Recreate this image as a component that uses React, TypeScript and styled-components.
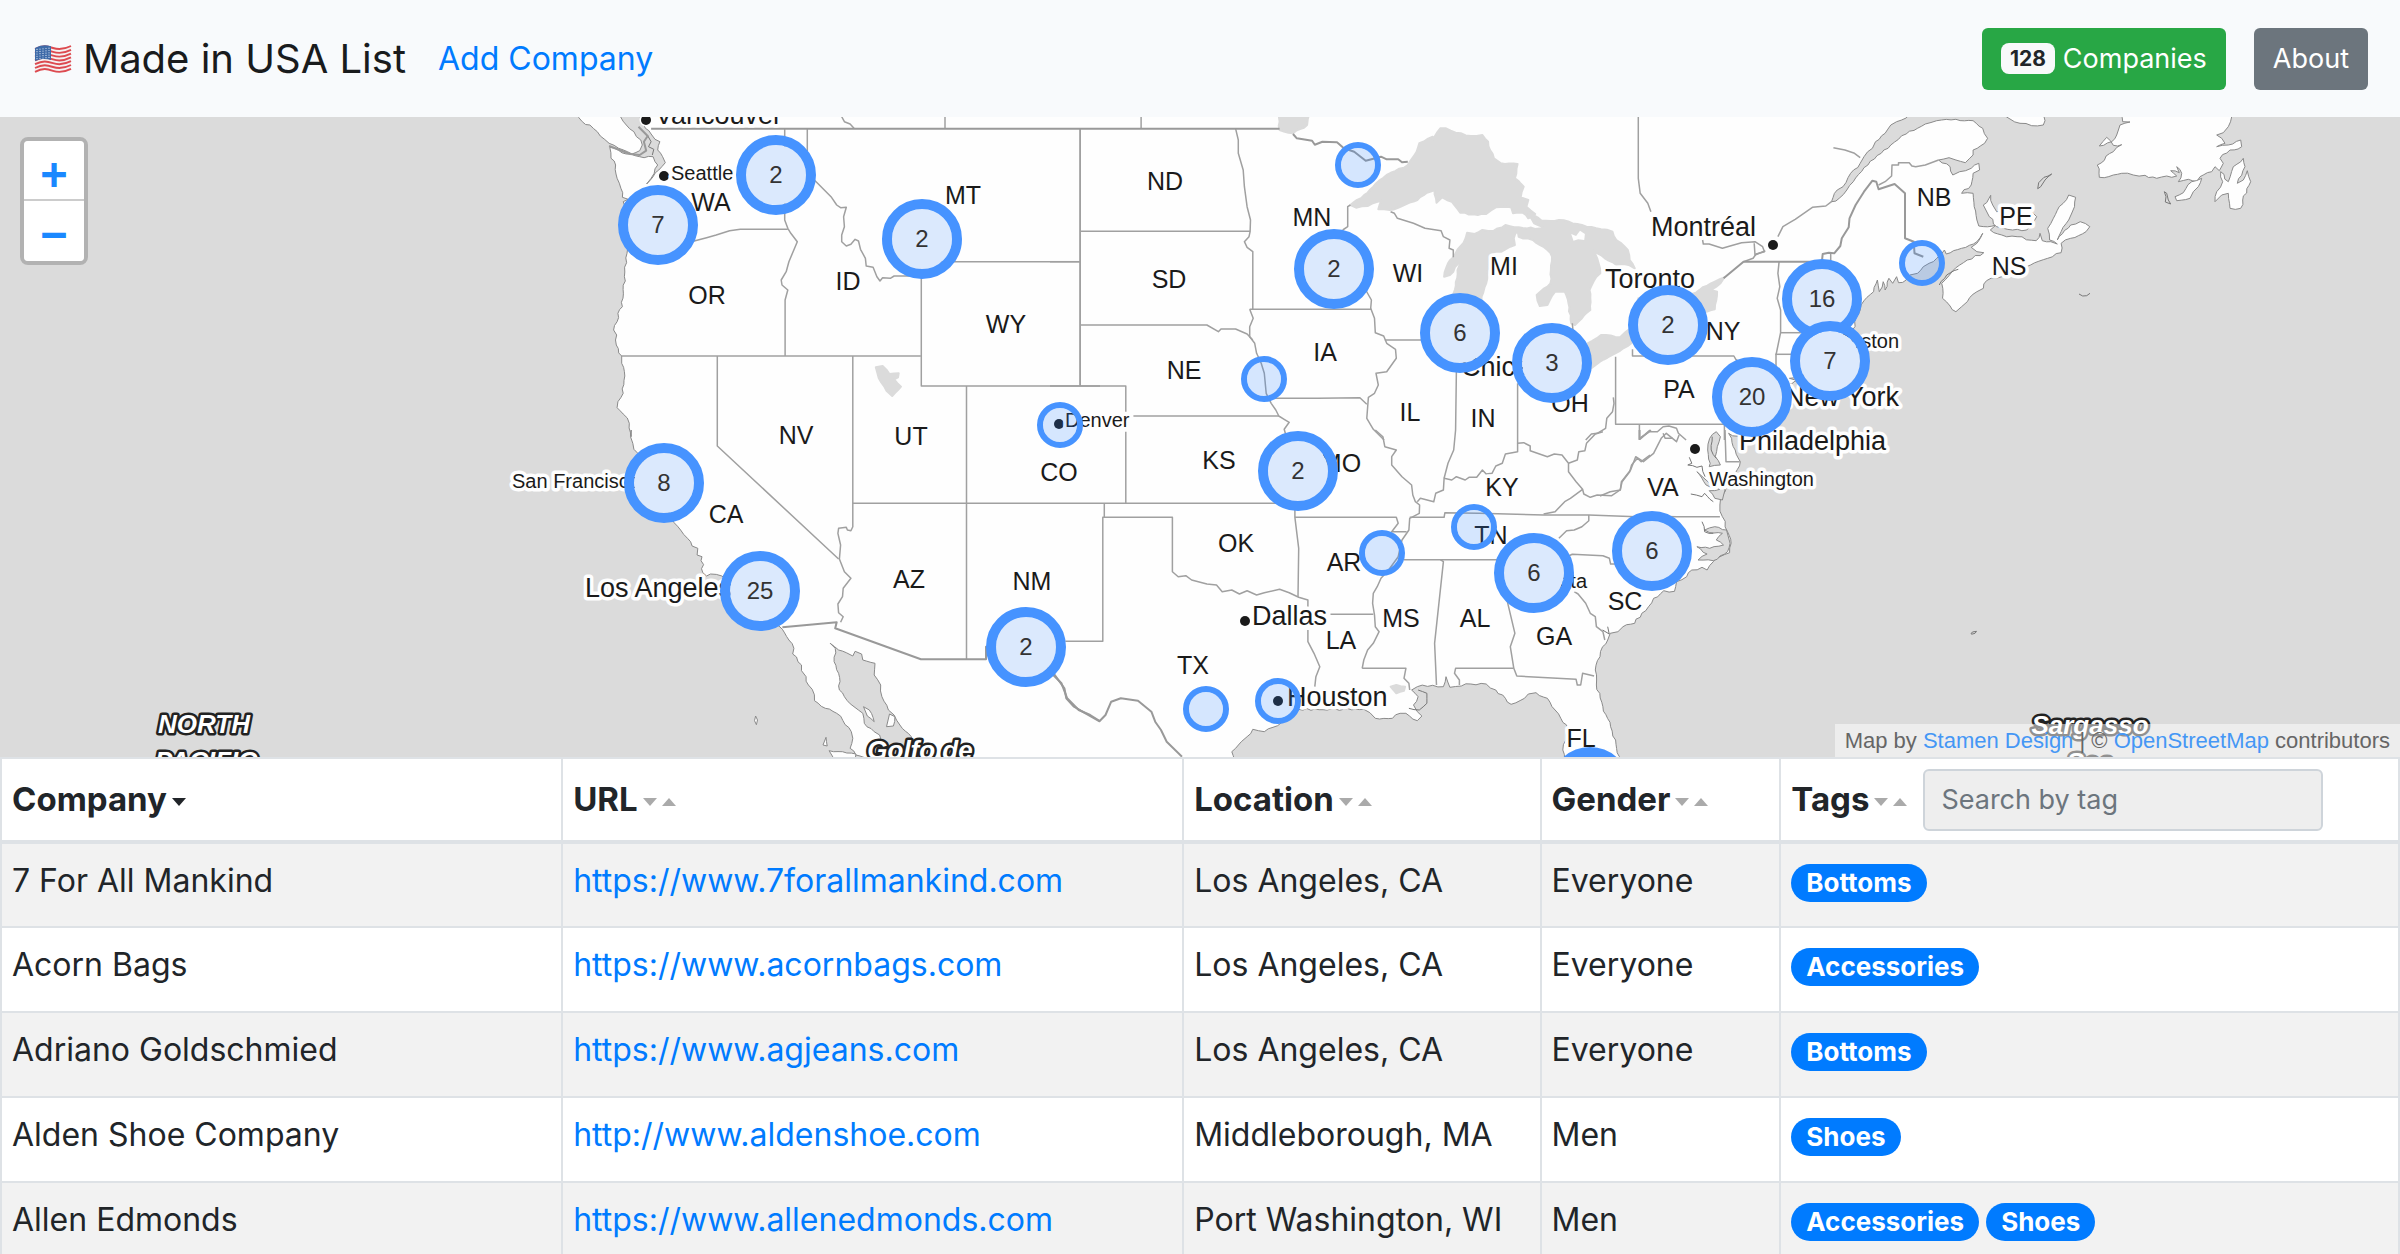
import React from "react";
import styled, { createGlobalStyle } from "styled-components";

const GlobalStyle = createGlobalStyle`
  *, *::before, *::after { box-sizing: border-box; }
  html { scrollbar-width: none; }
  body {
    margin: 0;
    background: #fff;
    color: #212529;
    font-family: Inter, "Liberation Sans", sans-serif;
    font-size: 32px;
    line-height: 51px;
  }
  a { color: #007bff; text-decoration: none; }
  button, input { font-family: inherit; }
`;

/* ---------- Navbar ---------- */

const Navbar = styled.header`
  display: flex;
  align-items: center;
  gap: 32px;
  min-height: 117px;
  padding: 27px 32px;
  background: #f8fafc;
`;

const Brand = styled.a`
  display: flex;
  align-items: center;
  gap: 9px;
  color: #191b1d;
  font-size: 40px;
  line-height: 60px;
  white-space: nowrap;
`;

const NavLink = styled.a`
  font-size: 32px;
  white-space: nowrap;
`;

const NavActions = styled.div`
  display: flex;
  gap: 28px;
  margin-left: auto;
`;

const NavButton = styled.button<{ $color: string }>`
  display: flex;
  align-items: center;
  gap: 8px;
  height: 62px;
  padding: 0 19px;
  border: 0;
  border-radius: 6px;
  background: ${(p) => p.$color};
  color: #fff;
  font-size: 27px;
  white-space: nowrap;
`;

const Count = styled.span`
  padding: 4px 9px;
  border-radius: 8px;
  background: #f8f9fa;
  color: #212529;
  font-size: 21px;
  font-weight: 700;
  line-height: 23px;
`;

/* ---------- Map ---------- */

const MapPane = styled.section`
  position: relative;
  height: 640px;
  overflow: hidden;
  background: #dbdbdb;
`;

const MapPlane = styled.div`
  position: absolute;
  top: 0;
  left: 50%;
  width: 2400px;
  height: 640px;
  margin-left: -1200px;
`;

const MapSvg = styled.svg`
  display: block;
  width: 100%;
  height: 100%;
  font-family: "Liberation Sans", Arial, sans-serif;
`;

const Marker = styled.button<{ $x: number; $y: number; $small?: boolean }>`
  position: absolute;
  left: ${(p) => p.$x}px;
  top: ${(p) => p.$y - 117}px;
  width: ${(p) => (p.$small ? 46 : 80)}px;
  height: ${(p) => (p.$small ? 46 : 80)}px;
  padding: 0;
  transform: translate(-50%, -50%);
  border: ${(p) => (p.$small ? 6 : 10)}px solid #4693ff;
  border-radius: 50%;
  background: ${(p) => (p.$small ? "rgba(51, 136, 255, 0.2)" : "#dbe9fd")};
  background-clip: padding-box;
  color: #333;
  font-family: "Liberation Sans", Arial, sans-serif;
  font-size: 24px;
  line-height: 28px;
`;

const ZoomControl = styled.div`
  position: absolute;
  top: 20px;
  left: 20px;
  display: flex;
  flex-direction: column;
  border: 4px solid #b2b2b2;
  border-radius: 8px;
  overflow: hidden;
`;

const ZoomButton = styled.button`
  width: 60px;
  height: 60px;
  padding: 6px 0 0;
  border: 0;
  background: #fff;
  color: #1a88ff;
  font-family: "DejaVu Sans Mono", monospace;
  font-size: 44px;
  font-weight: 700;
  line-height: 54px;
  &:first-child { border-bottom: 2px solid #ccc; }
`;

const Attribution = styled.div`
  position: absolute;
  right: 0;
  bottom: 0;
  padding: 0 10px;
  background: rgba(255, 255, 255, 0.5);
  color: #666;
  font-family: "Liberation Sans", Arial, sans-serif;
  font-size: 22px;
  line-height: 33px;
  a { color: #4597f5; }
`;

/* ---------- Table ---------- */

const Table = styled.table`
  width: 100%;
  table-layout: fixed;
  border-collapse: collapse;
`;

const HeadCell = styled.th<{ $width: string }>`
  width: ${(p) => p.$width};
  height: 84px;
  padding: 8px 10px;
  border: 2px solid #dee2e6;
  border-bottom-width: 4px;
  text-align: left;
  vertical-align: middle;
  white-space: nowrap;
`;

const HeadRow = styled.div`
  display: flex;
  align-items: center;
  gap: 16px;
`;

const SortButton = styled.button`
  display: flex;
  align-items: center;
  gap: 5px;
  padding: 0;
  border: 0;
  background: none;
  color: #212529;
  font-size: 33px;
  font-weight: 700;
  line-height: 51px;
`;

const Arrow = styled.span<{ $up?: boolean; $active?: boolean }>`
  margin-top: 4px;
  border: 7px solid transparent;
  border-width: ${(p) => (p.$up ? "0 7px 8px" : "8px 7px 0")};
  border-${(p) => (p.$up ? "bottom" : "top")}-color: ${(p) => (p.$active ? "#212529" : "#aaa")};
`;

const TagSearch = styled.input`
  width: 400px;
  min-width: 0;
  height: 62px;
  padding: 0 16px;
  border: 2px solid #ced4da;
  border-radius: 6px;
  background: #eee;
  color: #495057;
  font-size: 27px;
  &::placeholder { color: #6c757d; opacity: 1; }
`;

const Row = styled.tr`
  background: #fff;
  &:nth-child(odd) { background: #f2f2f2; }
`;

const Cell = styled.td`
  height: 85px;
  padding: 11px 10px 9px;
  border: 2px solid #dee2e6;
  vertical-align: top;
  white-space: nowrap;
`;

const Tags = styled.div`
  display: flex;
  gap: 7px;
  padding-top: 9px;
`;

const Tag = styled.span`
  padding: 0 15px;
  border-radius: 20px;
  background: #007bff;
  color: #fff;
  font-size: 26px;
  font-weight: 700;
  line-height: 38px;
`;

/* ---------- Map geometry ---------- */

type Pt = [number, number];

/* The outlines are digitised in sheets; each has its own origin and scale. */
const SHEETS: Record<string, [number, number, number, number]> = {
  A: [500, 110, 0.38265, 1 / 3],
  B: [1050, 110, 0.38265, 1 / 3],
  C: [1600, 110, 0.38265, 1 / 3],
  D: [500, 430, 0.38265, 1 / 3],
  E: [1050, 430, 0.38265, 1 / 3],
  F: [1600, 430, 0.5102, 1 / 3],
  G: [1900, 0, 1 / 3, 1 / 3],
};

/* Reads "A 1,2 3,4 B 5,6" into plane coordinates. */
const read = (src: string): Pt[] => {
  let sheet = SHEETS.A;
  const out: Pt[] = [];
  src.trim().split(/\s+/).forEach((tok) => {
    if (SHEETS[tok]) {
      sheet = SHEETS[tok];
      return;
    }
    const [x, y] = tok.split(",").map(Number);
    out.push([sheet[0] + x * sheet[2], sheet[1] + y * sheet[3]]);
  });
  return out;
};

/* Breaks long straight runs into the small irregularities of a shoreline. */
const roughen = (pts: Pt[], amount: number): Pt[] => {
  const out: Pt[] = [];
  pts.forEach((p, i) => {
    out.push(p);
    const q = pts[i + 1];
    if (!q) return;
    const dx = q[0] - p[0];
    const dy = q[1] - p[1];
    const len = Math.hypot(dx, dy);
    const n = Math.min(60, Math.floor(len / 4));
    for (let k = 1; k < n; k++) {
      const r = Math.sin((p[0] + k * 12.9898) * 7.23 + p[1] * 3.1) * 43758.5453;
      const off = (r - Math.floor(r) - 0.5) * amount;
      out.push([p[0] + (dx * k) / n - (dy / len) * off, p[1] + (dy * k) / n + (dx / len) * off]);
    }
  });
  return out;
};

const path = (src: string, rough = 0, closed = false) => {
  const pts = rough ? roughen(read(src), rough) : read(src);
  return "M" + pts.map(([x, y]) => `${x.toFixed(1)},${y.toFixed(1)}`).join("L") + (closed ? "Z" : "");
};

const LAND = [
  // North America, clockwise from the Strait of Georgia
  `A 350,-20 B 1000,-20 C 812,10 800,24 775,35 760,45 745,70 720,95 712,115 690,140 680,160 655,190 635,230 620,240 605,275
   625,265 645,240 662,215 700,165 735,130 760,105 800,72 850,42 880,32 930,28 975,32 1000,55 1013,85 1005,100 975,120 975,135 955,158 930,150 912,143 885,150
   915,170 922,195 940,185 970,175 990,160 992,180 975,190 972,215 970,225 945,250 975,250 978,290 985,330 990,348 1035,345 1020,360 1050,375 1090,380 1140,392 1150,370
   1156,392 1178,395 1195,402 1175,390 1170,355 1185,325 1200,290 1225,255 1243,262 1240,290 1232,312 1225,330 1205,365 1195,390 1230,345 1255,335 1280,350 1270,365 1230,385 1205,400 1205,428
   1170,445 1125,465 1090,480 1050,500 1010,512 1002,535 985,545 960,575 945,590 930,605 915,588 895,565 893,520 920,485 960,450 1003,428 985,425 970,412 985,400
   1000,370 985,395 945,415 905,432 900,420 880,445 860,460 845,470 830,490 810,495 800,510 780,518 775,500 765,520 755,505 745,540 740,515 730,545 725,510 715,545 690,572
   680,600 660,660 640,690 660,710 680,730 655,745 640,740 610,770 560,785 520,800 495,805 520,812 470,830 440,870 430,920 400,960 370,985
   F 252,10 258,25 265,60 275,95 265,130 255,160 245,185 236,210 235,225 240,260 250,305 257,340 254,368 235,380 222,395 210,420 200,412 180,420 170,440 150,455
   146,484 125,482 105,505 95,530 82,550 68,580 45,590 35,605 20,610 15,630 5,650 0,680
   E 1425,720 1428,765 1445,830 1465,890 1478,930 1488,980 1490,1040 1350,1040 1340,960 1348,930 1350,885 1335,865 1320,840 1300,805
   1270,788 1250,792 1240,805 1205,823 1190,805 1165,780 1140,762 1100,762 1075,768 1045,772 1035,740 1028,770 1000,766 960,770 945,780 962,800 950,825
   960,845 972,858 960,872 930,850 915,850 895,865 850,865 836,848 820,838 650,838 625,855 605,878 560,905 530,898 515,920 500,935 485,955 475,965 490,1040
   D 1040,1040 1000,1010 930,975 915,955 922,925 918,905 880,850 850,835 822,812 816,778 806,765 800,740 788,722 788,705 765,672 768,655 755,630 738,598
   700,560 620,480 580,438 550,432 540,438 530,428 528,380 515,375 517,355 502,348 490,325 472,300 455,278 420,200 390,110 360,70 350,58 347,40 341,20 343,0
   A 343,980 338,940 322,912 306,893 308,875 322,850 325,785 318,760 318,738 304,705 305,675 297,660 306,635 308,610 320,590 325,500 332,430 330,300 322,275
   335,268 320,262 316,235 306,205 302,165 290,145 287,112 330,132 365,140 400,140 405,155 412,165 403,190 395,205 383,222 400,200 415,180 432,158 425,140
   412,120 418,95 405,88 395,72 380,55`,
  `A 195,10 215,35 235,45 262,78 285,100 310,115 345,132 365,122 372,105 368,90 350,65 330,45 315,20 310,10`,
  `G 310,340 330,357 360,370 395,377 430,375 435,362 425,340`,
  `G 664,340 668,365 690,366 660,375 650,405 635,425 598,438 620,412 640,436 665,434 640,455 592,495 598,532 640,525 665,520 700,525 735,526 770,535 800,528
   830,528 812,512 838,518 830,500 845,520 835,545 865,538 890,545 900,530 935,515 945,500 958,512 970,490 960,475 990,450 1025,440 1022,420 985,435 950,440 975,430 965,415 950,405 970,398 985,380 995,350 990,340`,
  `G 825,590 850,578 875,545 905,535 895,560 880,575 870,595 830,602`,
  `G 945,605 950,575 968,545 962,515 985,545 1000,500 1030,475 1035,500 1012,550 1030,540 1042,512 1052,545 1028,600 1022,625 990,625 985,580 965,585`,
  `G 250,615 272,586 278,615 290,635 330,620 400,640 410,650 380,690 310,685 290,680 268,650`,
];

const WATER = [
  // Gulf of California
  `D 863,640 885,660 905,668 922,678 928,664 945,672 948,690 980,700 978,735 995,765 998,800 1015,840 1030,855 1045,885 1075,920 1085,1000 1030,1000 1010,960 992,915
   978,905 952,880 948,850 925,830 900,800 887,780 885,730 873,695 876,655`,
  // Chesapeake Bay
  `F 228,5 215,25 211,60 216,100 214,110 236,105 226,80 230,50 236,20`,
  `F 190,125 208,165 235,178 214,182 225,205 240,210 245,180 232,165 215,160`,
  `F 248,300 225,290 205,300 215,308 240,310 228,330 242,345 215,355 190,350 210,372 192,390 222,392 250,365 255,340`,
];

const LAKES = [
  `B 785,285 830,248 860,212 880,195 935,165 958,125 965,100 1000,80 1000,90 1020,55 1035,55 1060,68 1100,78 1130,75 1145,95 1150,120 1160,145 1178,160 1222,162 1215,205
   1238,230 1230,262 1250,270 1245,290 1268,312 1250,325 1235,308 1210,310 1205,292 1165,292 1140,312 1118,315 1072,308 1050,275 1025,262 1010,278 1005,240 985,248 960,270
   920,288 888,300 858,298 866,272 830,288 800,293`,
  `B 1248,305 1285,332 1330,330 1390,345 1440,358 1470,365 1480,390 1510,420 1515,450 1528,475 1500,462 1480,465 1450,445 1420,420 1430,445 1438,490 1420,515 1410,540 1412,600
   1372,645 1362,640 1355,580 1345,545 1320,545 1300,585 1280,588 1272,555 1308,520 1312,440 1300,420 1262,390 1225,380 1222,362 1212,385 1215,405 1180,425 1150,430 1140,520
   1128,560 1130,640 1115,690 1060,690 1045,610 1058,540 1065,480 1075,450 1045,495 1030,500 1040,460 1060,430 1080,400 1090,368 1110,372 1130,360 1160,362 1190,345
   1225,352 1300,358 1265,340`,
  `B 1385,765 1405,700 1440,675 1490,682 1505,665 C 80,655 82,700 40,730 0,755 B 1415,775`,
  `C 240,552 290,520 325,502 315,520 290,540 306,545 300,598 278,605 200,640 90,610 100,565`,
  `B 597,10 600,60 635,70 672,45 678,10`,
  `A 982,772 1000,768 1018,792 1042,790 1040,802 1030,808 1048,830 1025,858 1010,842 990,805`,
  `E 890,770 905,765 928,770 925,782 905,790`,
];

const ISLANDS = [
  `D 950,830 965,840 978,875 960,858`,
  `D 1018,852 1032,860 1028,888 1010,890`,
  `D 668,858 673,870 670,884 665,872`,
  `D 852,922 855,948 844,945`,
  `D 860,962 895,965 930,972 925,1000 880,1000`,
];

const LAKE_ISLAND = `B 1362,372 1375,378 1385,362 1398,372 1396,390 1380,388 1368,392`;

const MISC_COAST = [
  `G 413,566 416,548 432,532 455,522 435,540 422,560 413,566`,
  `G 793,575 800,580 805,600 812,612 796,606 798,590 793,575`,
  `G 537,882 548,888 560,887 570,880`,
  `G 118,855 140,825 175,808`,
  `F 727,612 730,606 738,604 735,610 728,613`,
  `E 962,780 985,790 985,820 965,840 938,835`,
  `F 220,20 218,60 228,85`,
  `F 175,82 180,100 172,105 190,112 200,108 206,140`,
  `F 178,192 200,200 205,190 222,215`,
  `F 200,275 205,305 222,310`,
  `F 15,590 18,612 5,600`,
  `A 385,75 395,95 388,110 402,118 398,135`,
];

const BORDERS = [
  `A 395,56 1568,56 B 600,56`,
  `B 635,72 645,85 685,92 692,104 712,95 750,97 768,115 795,125 825,152 865,140 880,148 910,148 920,157 935,155`,
  `C 323,505 375,455 580,455 582,432 598,428 612,430 628,408 632,385 650,352 652,325 668,285 690,245 712,212 722,215 728,238 770,222 797,250 797,385 820,395 822,430 845,440`,
  `D 738,592 880,577 876,595 1100,688 1270,688 1270,650 1375,650 1450,735 1475,775 1480,805 1500,830 1530,850 1568,875`,
  `E 0,725 30,760 45,805 75,840 105,855 130,873 145,855 160,815 185,805 230,812 265,845 275,875 290,900 305,935 345,980`,
  `A 285,108 340,132 365,135 382,122 376,95 386,78 362,50`,
];

const STATES = [
  `A 893,20 900,35 915,42 925,55`, `A 1163,20 1163,55`, `B 238,20 238,55`,
  `A 744,56 744,330 752,355 760,370 777,395 755,455 748,485 735,510 737,525 752,540 745,570 745,738`,
  `A 500,395 540,383 565,375 600,362 628,358 752,358`,
  `A 803,56 803,190 830,220 865,260 880,285 890,293 905,292 898,320 900,350 893,375 893,395 905,408 917,403 928,388 937,393 942,418 955,445 957,468 975,472 985,500 993,513 1000,503 1020,505 1030,498 1101,498`,
  `A 318,738 1100,738`, `A 1101,455 1516,455`, `A 1516,56 1516,828`, `A 1101,455 1101,828 1568,828`,
  `A 568,738 D 568,48 885,387`, `A 922,738 D 922,290 917,302 908,300 905,292 885,295 883,310 890,345 887,387 900,425 917,445 897,475 895,500 883,522 885,548 897,560 890,577`,
  `A 1219,828 D 1219,688`, `D 922,220 E 640,220`,
  `B 0,455 79,455`, `B 79,56 79,828`, `B 79,364 523,364`,
  `B 485,56 492,90 492,130 505,180 508,230 515,290 524,330 523,365 520,380 508,395 515,412 530,425 530,598`,
  `B 79,645 410,645 440,665 447,657 485,657 515,672 530,690`,
  `B 522,598 840,598`, `B 522,598 531,625 522,650 522,680 535,700 540,730 552,760 560,790 565,850 578,880 590,900 598,918 612,928 625,937 612,958 620,990`,
  `B 0,828 198,828 198,905`, `B 198,965 E 198,220`, `B 218,918 598,918`,
  `B 570,865 700,865 810,863 828,883`, `B 875,690 970,690`, `B 765,360 778,350 778,290 785,285`,
  `B 825,540 840,570 838,595 848,625 850,668 872,678 880,700 903,718 905,745 880,785 852,790 858,825 848,850 832,862 828,925 845,958 873,990`,
  `B 890,305 900,310 908,325 950,340 980,355 1022,362 1028,380 1045,390 1043,415 1054,420 1054,442`,
  `B 1062,780 E 1060,0 1055,60 1040,100 1030,145`, `B 1222,820 E 1222,40`,
  `B 1478,740 1478,943 C 325,943`, `B 1472,862 1474,880 1470,905 1455,925 1452,955 1430,970 1415,972 1400,990`,
  `C 100,20 100,205 105,250 125,280 133,305`, `B 1365,640 1367,665`,
  `C 728,225 745,215 762,198 763,165 780,165 780,158 808,158 815,168 825,170 850,165 885,150`,
  `C 268,390 270,402 285,402 320,415 340,408 370,398 405,395 425,410 430,425 408,432 400,445 375,455`,
  `C 403,400 405,435 432,422`,
  `C 465,380 478,350 500,335 510,328 555,292 590,288 605,275`,
  `C 468,455 465,490 470,530 463,565 470,592 472,600 472,668 460,735 460,780`,
  `C 472,668 525,668`, `C 458,733 505,733`, `C 603,428 603,455`,
  `C 85,718 85,738 350,738 355,748 380,770`, `C 103,943 103,990`, `C 325,943 325,990`,
  `C 103,985 130,965 150,965 165,950 180,948 200,955 205,970 225,990`,
  `C 165,970 170,985 190,985`,
  `C 610,113 640,120 665,130 680,143`,
  `E 142,220 142,262`, `E 40,634 138,634 138,262 320,262 320,425 335,440 355,437 370,450 410,462 435,465 450,485 475,480 495,492 515,482 540,495 560,488 600,478 625,488 650,502 674,510 674,530`,
  `E 640,220 640,262 650,355 648,500`, `E 640,262 905,262 910,280 893,305 932,305`,
  `E 940,262 1030,262 1032,248 1120,250 1290,255 1408,255 1568,262`,
  `F 98,258 150,260 235,260`,
  `E 850,0 870,20 875,50 905,60 893,80 893,105 920,140 945,165 948,195 955,215 966,225 965,250 940,265 938,300 920,330 910,380 885,420 865,445 855,470 845,490 843,520 848,555 850,590 860,605 845,640 830,660 820,690 816,715`,
  `E 674,600 674,635 690,670 705,710 695,740 692,770`, `E 733,553 845,553`,
  `E 816,715 930,715 925,745 938,760 940,780`, `E 925,389 1170,389`,
  `E 1020,389 1028,395 1005,640 1010,765`, `E 1190,490 1215,610 1203,650 1212,715`,
  `E 1212,715 1060,715 1057,730 1070,750 1070,765`, `E 1212,715 1220,738 1375,748 1378,765 1387,765 1392,730 1422,738`,
  `E 1370,485 1380,492 1400,520 1412,550 1425,560 1428,590 1445,605 1450,630`, `E 1355,378 1365,373 1445,377 1462,385 1465,402 1500,402`,
  `E 1408,255 1408,272 1390,290 1370,300 1350,302 1330,325`, `E 1290,252 1320,245 1345,215 1360,205 1392,178`,
  `E 960,215 968,205 1003,215 1008,190 1028,180 1030,145 1050,150 1062,140 1085,150 1095,142 1115,142 1130,120 1140,132 1155,130 1165,108 1182,100 1190,72 1222,65 1222,40 1238,38 1255,48 1255,62 1300,80 1318,72 1338,75 1355,100 1355,125 1375,155 1392,178 1395,192 1412,202 1430,195 1468,197 1490,180 1495,155 1515,125 1520,105 1535,85 1545,95 1568,75`,
  `E 1355,100 1378,90 1382,65 1398,62 1402,40 1425,12 1445,5`, `E 1540,0 1540,28 1568,0`,
  `F 0,198 20,185 40,180 42,155 60,120 70,80 85,95 105,70 120,25 130,10 150,35 155,15`, `F 78,0 78,28 100,0`,
  `F 245,0 247,95 274,95`,
];

const DOTS: Pt[] = [[646, 120], [664, 176], [1059, 424], [1773, 245], [1695, 449], [1245, 621], [1278, 701]];

const STATE_NAMES: [string, number, number][] = [
  ["WA", 711, 211], ["MT", 963, 204], ["OR", 707, 304], ["ID", 848, 290], ["WY", 1006, 333], ["NV", 796, 444], ["UT", 911, 445],
  ["ND", 1165, 190], ["SD", 1169, 288], ["NE", 1184, 379], ["MN", 1312, 226], ["IA", 1325, 361], ["WI", 1408, 282], ["MI", 1504, 275],
  ["IL", 1410, 421], ["IN", 1483, 427], ["OH", 1570, 412], ["NB", 1934, 206], ["PE", 2016, 225], ["NS", 2009, 275], ["NY", 1723, 340],
  ["PA", 1679, 398], ["CA", 726, 523], ["CO", 1059, 481], ["AZ", 909, 588], ["NM", 1032, 590], ["KS", 1219, 469], ["MO", 1341, 472],
  ["OK", 1236, 552], ["AR", 1344, 571], ["TN", 1491, 544], ["KY", 1502, 496], ["MS", 1401, 627], ["AL", 1475, 627], ["GA", 1554, 645],
  ["SC", 1625, 610], ["LA", 1341, 649], ["TX", 1193, 674], ["FL", 1581, 747], ["VA", 1663, 496],
];

const CITY_NAMES: [string, number, number, number, ("start" | "end")?][] = [
  ["Vancouver", 655, 124, 27], ["Seattle", 671, 180, 20], ["Denver", 1065, 427, 20], ["Chicago", 1461, 376, 27],
  ["Toronto", 1605, 288, 27], ["Montréal", 1651, 236, 27], ["Boston", 1899, 348, 20, "end"], ["New York", 1899, 406, 27, "end"],
  ["Philadelphia", 1739, 450, 27], ["Washington", 1709, 486, 20], ["San Francisco", 512, 488, 20], ["Los Angeles", 585, 597, 27],
  ["Dallas", 1252, 625, 27], ["Houston", 1287, 706, 27], ["Atlanta", 1587, 588, 20, "end"],
];

const SEA_NAMES: [string, number, number][] = [
  ["NORTH", 204, 733], ["PACIFIC", 206, 770], ["Golfo de", 920, 759], ["Sargasso", 2090, 734], ["Sea", 2090, 771],
];

const MARKERS: [number, number, string?][] = [
  [658, 225, "7"], [776, 175, "2"], [922, 239, "2"], [1334, 269, "2"], [1460, 333, "6"], [1552, 363, "3"], [1668, 325, "2"],
  [1822, 299, "16"], [1830, 361, "7"], [1752, 397, "20"], [664, 483, "8"], [760, 591, "25"], [1026, 647, "2"], [1298, 471, "2"],
  [1534, 573, "6"], [1652, 551, "6"], [1590, 787, "3"],
  [1060, 425], [1358, 165], [1264, 379], [1922, 263], [1474, 527], [1382, 553], [1206, 709], [1278, 701],
];

const MapDrawing = () => (
  <MapSvg viewBox="0 117 2400 640" role="img" aria-label="Map of the United States">
    <g fill="#fefefe" stroke="#8a8a8a" strokeWidth="1" strokeLinejoin="round">
      {LAND.map((d, i) => <path key={i} d={path(d, 2.6, true)} />)}
    </g>
    <g fill="#dbdbdb" stroke="#8a8a8a" strokeWidth="1">
      {WATER.map((d, i) => <path key={i} d={path(d, 2, true)} />)}
    </g>
    <g fill="#dbdbdb" stroke="#dbdbdb" strokeWidth="2" strokeLinejoin="round">
      {LAKES.map((d, i) => <path key={i} d={path(d, 1.6, true)} />)}
    </g>
    <g fill="#fefefe" stroke="#8a8a8a" strokeWidth="1">
      {ISLANDS.map((d, i) => <path key={i} d={path(d, 1.5, true)} />)}
      <path stroke="none" d={path(LAKE_ISLAND, 0, true)} />
    </g>
    <g fill="none" stroke="#777" strokeWidth="1">
      {MISC_COAST.map((d, i) => <path key={i} d={path(d, 1.6)} />)}
    </g>
    <g fill="none" stroke="#a0a0a0" strokeWidth="1.5" strokeLinejoin="round">
      {STATES.map((d, i) => <path key={i} d={path(d)} />)}
    </g>
    <g fill="none" stroke="#999" strokeWidth="2" strokeLinejoin="round">
      {BORDERS.map((d, i) => <path key={i} d={path(d)} />)}
    </g>
    <g fill="#1a1a1a" stroke="#fefefe" strokeWidth="7" strokeLinejoin="round" paintOrder="stroke">
      {DOTS.map(([x, y]) => <circle key={x} cx={x} cy={y} r="5" strokeWidth="3" />)}
      {STATE_NAMES.map(([name, x, y]) => (
        <text key={name} x={x} y={y} fontSize="25" textAnchor="middle">{name}</text>
      ))}
      {CITY_NAMES.map(([name, x, y, size, anchor]) => (
        <text key={name} x={x} y={y} fontSize={size} textAnchor={anchor}>{name}</text>
      ))}
    </g>
    <g fill="#fff" stroke="#222" strokeWidth="5" strokeLinejoin="round" paintOrder="stroke" fontSize="26" fontStyle="italic" fontWeight="700">
      {SEA_NAMES.map(([name, x, y]) => (
        <text key={name} x={x} y={y} textAnchor="middle">{name}</text>
      ))}
    </g>
  </MapSvg>
);

/* ---------- Flag ---------- */

const wave = (y: number) => `M1,${y + 2} C9,${y - 2} 13,${y - 1} 19,${y + 1} S31,${y + 2} 37,${y - 1}`;

const Flag = () => (
  <svg width="42" height="30" viewBox="-2 -1 42 30" role="img" aria-label="Flag of the United States">
    <path d="M1,3 C9,-1 13,0 19,2 S31,3 37,0 V24 C31,27 25,28 19,26 S9,23 1,27 Z" fill="#f4f0f0" />
    {[0, 1, 2, 3, 4, 5, 6].map((i) => (
      <path key={i} d={wave(2 + i * 3.8)} fill="none" stroke="#dd4a50" strokeWidth="1.9" />
    ))}
    <path d="M1,3 C8,-0.5 12,0 17,1.3 V15 C12,13.4 7,13.5 1,16 Z" fill="#3e6aa8" />
    {[0, 1, 2, 3, 4].map((r) =>
      [0, 1, 2, 3, 4].map((c) => (
        <circle key={`${r}-${c}`} cx={3 + c * 3} cy={4.4 + r * 2.3 - c * 0.3} r="0.6" fill="#dfe8f4" />
      ))
    )}
  </svg>
);

/* ---------- Data ---------- */

const COLUMNS = [
  { name: "Company", width: "23.4%" },
  { name: "URL", width: "25.9%" },
  { name: "Location", width: "14.9%" },
  { name: "Gender", width: "10%" },
  { name: "Tags", width: "25.8%" },
];

const COMPANIES = [
  { name: "7 For All Mankind", url: "https://www.7forallmankind.com", location: "Los Angeles, CA", gender: "Everyone", tags: ["Bottoms"] },
  { name: "Acorn Bags", url: "https://www.acornbags.com", location: "Los Angeles, CA", gender: "Everyone", tags: ["Accessories"] },
  { name: "Adriano Goldschmied", url: "https://www.agjeans.com", location: "Los Angeles, CA", gender: "Everyone", tags: ["Bottoms"] },
  { name: "Alden Shoe Company", url: "http://www.aldenshoe.com", location: "Middleborough, MA", gender: "Men", tags: ["Shoes"] },
  { name: "Allen Edmonds", url: "https://www.allenedmonds.com", location: "Port Washington, WI", gender: "Men", tags: ["Accessories", "Shoes"] },
];

export default function App() {
  return (
    <>
      <GlobalStyle />
      <Navbar>
        <Brand href="#"><Flag />Made in USA List</Brand>
        <NavLink href="#add">Add Company</NavLink>
        <NavActions>
          <NavButton $color="#28a745"><Count>128</Count>Companies</NavButton>
          <NavButton $color="#6c757d">About</NavButton>
        </NavActions>
      </Navbar>
      <MapPane>
        <MapPlane>
          <MapDrawing />
          {MARKERS.map(([x, y, count]) => (
            <Marker key={`${x}-${y}`} $x={x} $y={y} $small={!count} aria-label={count ? `${count} companies` : "1 company"}>
              {count}
            </Marker>
          ))}
        </MapPlane>
        <ZoomControl>
          <ZoomButton aria-label="Zoom in">+</ZoomButton>
          <ZoomButton aria-label="Zoom out">−</ZoomButton>
        </ZoomControl>
        <Attribution>
          Map by <a href="#stamen">Stamen Design</a> | © <a href="#osm">OpenStreetMap</a> contributors
        </Attribution>
      </MapPane>
      <Table>
        <thead>
          <tr>
            {COLUMNS.map(({ name, width }, i) => (
              <HeadCell key={name} $width={width} scope="col">
                <HeadRow>
                  <SortButton>
                    {name}
                    <Arrow $active={i === 0} />
                    {i > 0 && <Arrow $up />}
                  </SortButton>
                  {name === "Tags" && <TagSearch type="text" placeholder="Search by tag" aria-label="Search by tag" />}
                </HeadRow>
              </HeadCell>
            ))}
          </tr>
        </thead>
        <tbody>
          {COMPANIES.map((c) => (
            <Row key={c.name}>
              <Cell>{c.name}</Cell>
              <Cell><a href={c.url}>{c.url}</a></Cell>
              <Cell>{c.location}</Cell>
              <Cell>{c.gender}</Cell>
              <Cell><Tags>{c.tags.map((t) => <Tag key={t}>{t}</Tag>)}</Tags></Cell>
            </Row>
          ))}
        </tbody>
      </Table>
    </>
  );
}
